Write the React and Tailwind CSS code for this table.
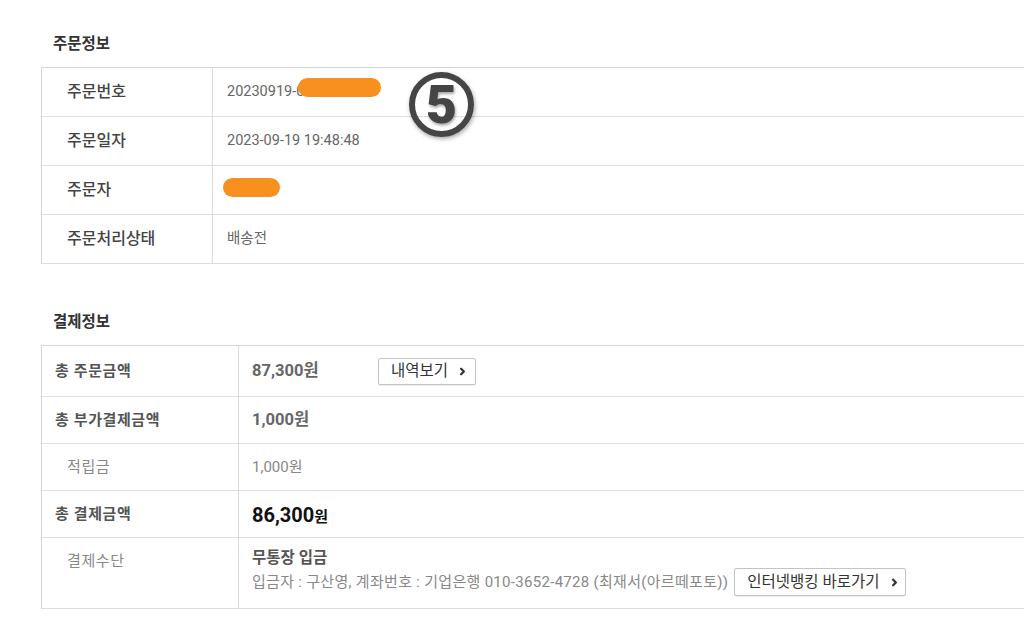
import { ChevronRight } from "lucide-react";

const font = { fontFamily: "Roboto, 'Noto Sans CJK KR', sans-serif" };

const orderRows = [
  { label: "주문번호", value: "20230919-0" },
  { label: "주문일자", value: "2023-09-19 19:48:48" },
  { label: "주문자", value: "" },
  { label: "주문처리상태", value: "배송전" },
];

const SmallButton = ({ children, className = "" }) => (
  <button
    type="button"
    className={`inline-flex items-center gap-[9px] border border-[#c4c4c4] rounded-[2px] bg-white text-[#333] leading-none pt-[2px] shadow-[0_1px_1px_rgba(0,0,0,0.08)] ${className}`}
  >
    {children}
    <ChevronRight className="w-[11px] h-[11px] text-[#333] -mt-[2px]" strokeWidth={5} />
  </button>
);

const OrderInfo = () => (
  <section>
    <h2 className="pl-[53px] pt-[34px] pb-[13px] text-[15.5px] leading-[20px] font-bold text-[#333]">주문정보</h2>
    <div className="relative ml-[41px] w-[1000px] border-t border-l border-[#d6d6d6]">
      {orderRows.map((row) => (
        <div key={row.label} className="flex h-[49px] border-b border-[#dedede]">
          <div className="w-[171px] shrink-0 border-r border-[#dedede] flex items-center pl-[25px] text-[16px] font-medium text-[#444]">
            {row.label}
          </div>
          <div className="flex items-center pl-[14px] text-[14.5px] text-[#666]">{row.value}</div>
        </div>
      ))}
      <span className="absolute left-[256px] top-[10px] w-[83px] h-[19px] rounded-full bg-[#f7901e]" />
      <span className="absolute left-[181px] top-[110px] w-[57px] h-[19px] rounded-full bg-[#f7901e]" />
      <span className="absolute left-[367px] top-[4px] w-[65px] h-[65px] rounded-full border-[6px] border-[#454545] flex items-center justify-center text-[54px] leading-none font-black text-[#454545] [text-shadow:1px_2px_3px_rgba(0,0,0,0.35)] shadow-[1px_2px_4px_rgba(0,0,0,0.35)]">
        5
      </span>
    </div>
  </section>
);

const PaymentInfo = () => (
  <section>
    <h2 className="pl-[53px] pt-[48px] pb-[13px] text-[15.5px] leading-[20px] font-bold text-[#333]">결제정보</h2>
    <div className="ml-[41px] w-[1000px] border-t border-l border-[#d6d6d6]">
      <div className="flex h-[51px] border-b border-[#dedede]">
        <div className="w-[197px] shrink-0 border-r border-[#dedede] flex items-center pl-[13px] text-[15px] tracking-[0.6px] font-bold text-[#555]">총 주문금액</div>
        <div className="flex items-center pl-[13px]">
          <span className="w-[126px] text-[16.5px] font-bold text-[#666]">87,300원</span>
          <SmallButton className="h-[27px] w-[98px] pl-[12px] text-[15.5px]">내역보기</SmallButton>
        </div>
      </div>
      <div className="flex h-[47px] border-b border-[#dedede]">
        <div className="w-[197px] shrink-0 border-r border-[#dedede] flex items-center pl-[13px] text-[15px] tracking-[0.6px] font-bold text-[#555]">총 부가결제금액</div>
        <div className="flex items-center pl-[13px] text-[16.5px] font-bold text-[#666]">1,000원</div>
      </div>
      <div className="flex h-[47px] border-b border-[#dedede]">
        <div className="w-[197px] shrink-0 border-r border-[#dedede] flex items-center pl-[25px] text-[15px] tracking-[0.6px] text-[#888]">적립금</div>
        <div className="flex items-center pl-[13px] text-[15px] text-[#888]">1,000원</div>
      </div>
      <div className="flex h-[47px] border-b border-[#dedede]">
        <div className="w-[197px] shrink-0 border-r border-[#dedede] flex items-center pl-[13px] text-[15px] tracking-[0.6px] font-bold text-[#555]">총 결제금액</div>
        <div className="flex items-center pl-[13px] pt-[2px] font-bold text-[#111]">
          <p>
            <span className="text-[20px]">86,300</span>
            <span className="text-[15px]">원</span>
          </p>
        </div>
      </div>
      <div className="flex h-[71px] border-b border-[#dedede]">
        <div className="w-[197px] shrink-0 border-r border-[#dedede] pl-[25px] pt-[12px] text-[15px] tracking-[0.6px] text-[#888]">결제수단</div>
        <div className="pl-[13px] pt-[10px]">
          <div className="text-[15.5px] leading-[20px] font-bold text-[#555]">무통장 입금</div>
          <div className="flex items-center gap-[6px] text-[15px] text-[#888]">
            <span className="tracking-[0.3px]">입금자 : 구산영, 계좌번호 : 기업은행 010-3652-4728 (최재서(아르떼포토))</span>
            <SmallButton className="h-[28px] w-[172px] pl-[12px] text-[15.5px]">인터넷뱅킹 바로가기</SmallButton>
          </div>
        </div>
      </div>
    </div>
  </section>
);

export default function App() {
  return (
    <div className="w-[1024px] h-[632px] overflow-hidden bg-white" style={font}>
      <OrderInfo />
      <PaymentInfo />
    </div>
  );
}
